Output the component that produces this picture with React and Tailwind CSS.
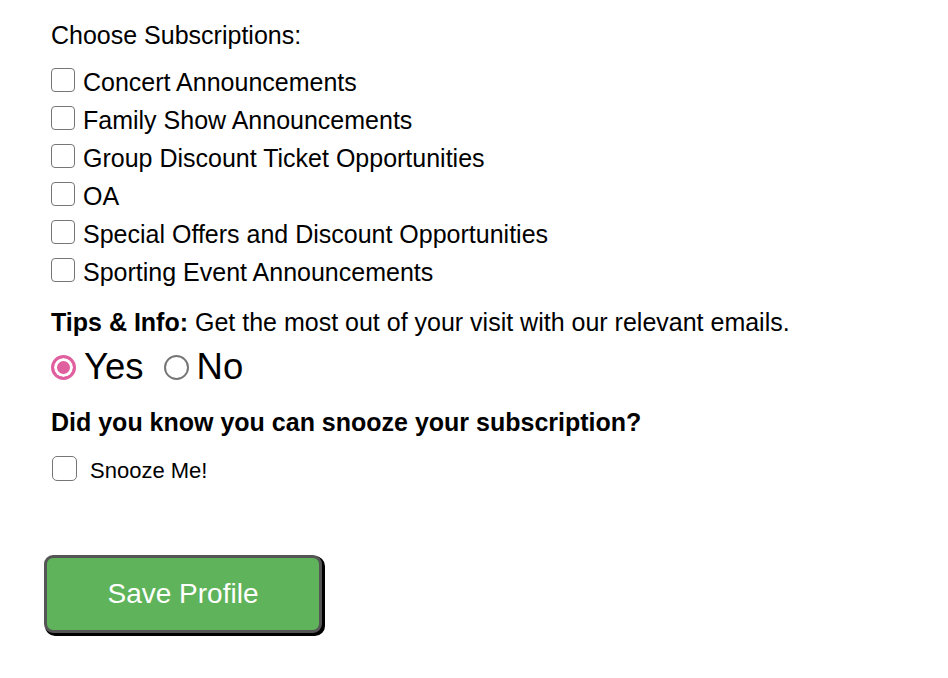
import { useState } from 'react';

const topics = [
  "Concert Announcements",
  "Family Show Announcements",
  "Group Discount Ticket Opportunities",
  "OA",
  "Special Offers and Discount Opportunities",
  "Sporting Event Announcements",
];

function Box({ checked, onChange, className = "" }) {
  return (
    <input
      type="checkbox"
      checked={checked}
      onChange={onChange}
      className={"appearance-none m-0 w-[24px] h-[24px] rounded-[4px] border-[1.5px] border-[#767676] bg-white checked:bg-[#e0609f] checked:border-[#e0609f] shrink-0 " + className}
    />
  );
}

export default function App() {
  const [subs, setSubs] = useState({});
  const [tips, setTips] = useState("yes");
  const [snooze, setSnooze] = useState(false);

  return (
    <div className="min-h-[678px] w-full bg-white pt-[16px] pl-[51px] text-black font-['Liberation_Sans',Arial,sans-serif] text-[25px]">
      <div className="leading-[38px]">Choose Subscriptions:</div>

      <div className="mt-[9px] flex flex-col">
        {topics.map((t) => (
          <label key={t} className="flex items-center h-[38px] gap-[8px]">
            <Box
              checked={!!subs[t]}
              onChange={() => setSubs({ ...subs, [t]: !subs[t] })}
              className="-mt-[4px]"
            />
            <span className="leading-[38px]">{t}</span>
          </label>
        ))}
      </div>

      <div className="mt-[12px] leading-[38px]">
        <span className="font-bold">Tips &amp; Info:</span> Get the most out of your visit with our relevant emails.
      </div>

      <div className="flex items-center h-[52px] text-[36.5px]">
        <label className="flex items-center gap-[8px]">
          <input
            type="radio"
            name="tips"
            checked={tips === "yes"}
            onChange={() => setTips("yes")}
            className="appearance-none m-0 w-[25px] h-[25px] rounded-full border-2 border-[#767676] bg-white checked:border-[3px] checked:border-[#e0609f] checked:bg-[#e0609f] checked:shadow-[inset_0_0_0_3px_white] shrink-0"
          />
          <span>Yes</span>
        </label>
        <label className="flex items-center gap-[8px] ml-[20px]">
          <input
            type="radio"
            name="tips"
            checked={tips === "no"}
            onChange={() => setTips("no")}
            className="appearance-none m-0 w-[25px] h-[25px] rounded-full border-2 border-[#767676] bg-white checked:border-[3px] checked:border-[#e0609f] checked:bg-[#e0609f] checked:shadow-[inset_0_0_0_3px_white] shrink-0"
          />
          <span>No</span>
        </label>
      </div>

      <div className="mt-[10px] leading-[38px] font-bold">Did you know you can snooze your subscription?</div>

      <label className="mt-[8px] flex items-center h-[38px] pl-[1px] gap-[13px] text-[22px]">
        <Box checked={snooze} onChange={() => setSnooze(!snooze)} className="w-[25px] h-[25px] rounded-[5px] border-2" />
        <span className="mt-[5px]">Snooze Me!</span>
      </label>

      <button className="mt-[68px] -ml-[7px] w-[278px] h-[78px] rounded-[9px] border-[3px] border-[#555555] bg-[#5fb35a] text-white text-[28px] shadow-[2px_2px_0_1px_#000] cursor-pointer">
        Save Profile
      </button>
    </div>
  );
}
